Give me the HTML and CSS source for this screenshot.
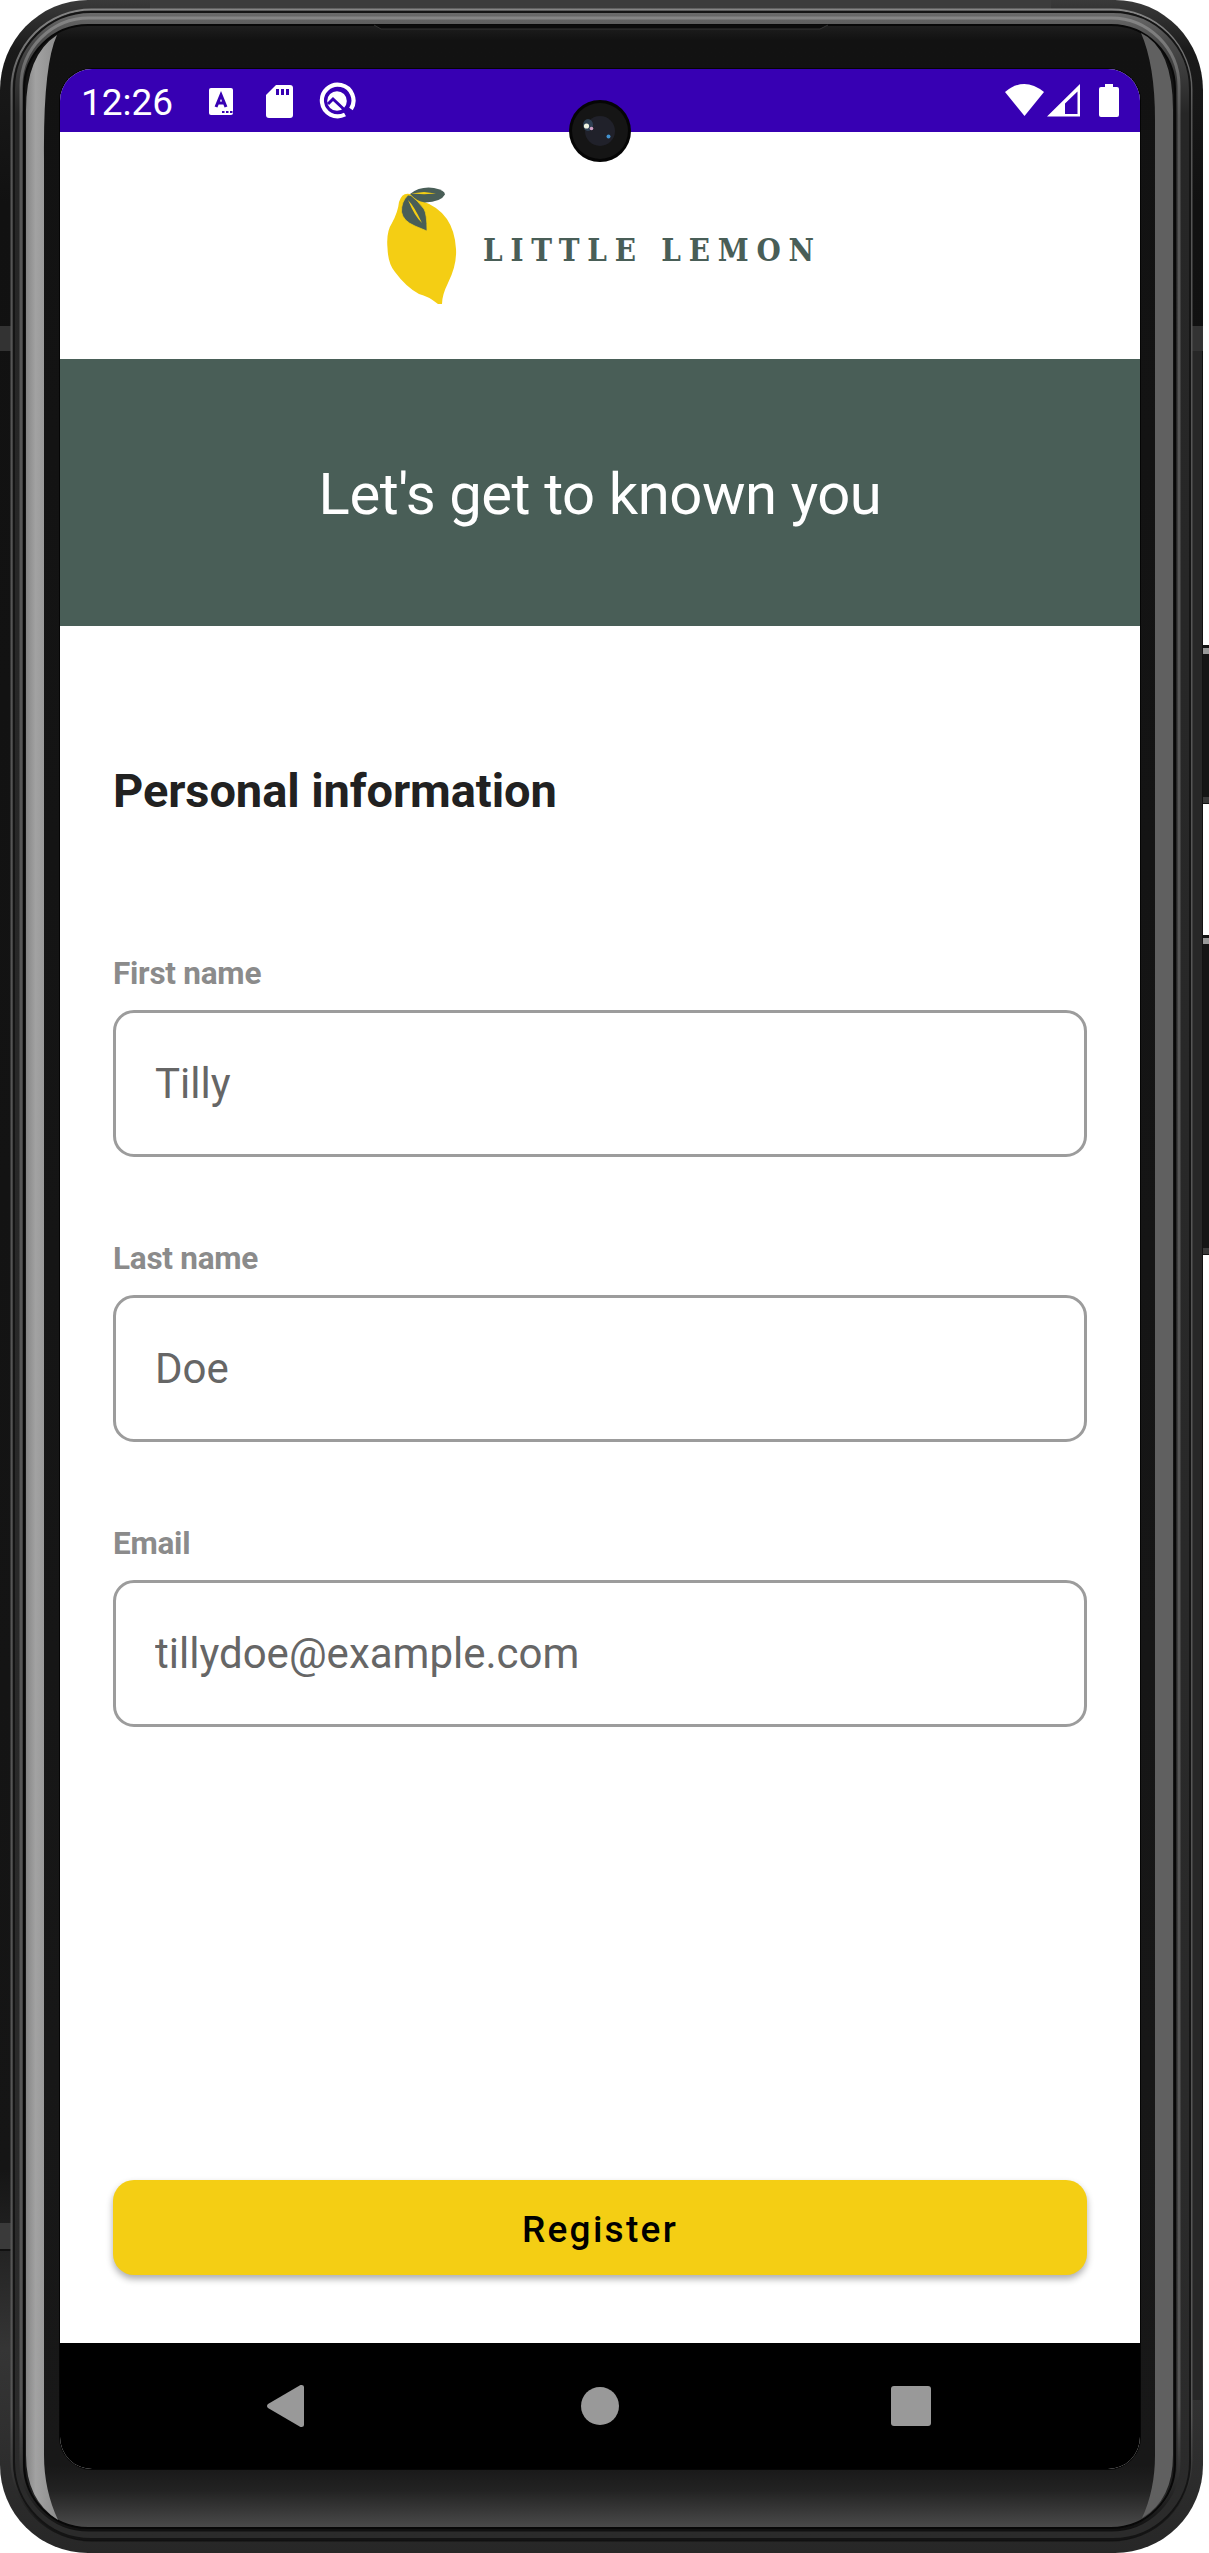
FILE: index.html
```html
<!DOCTYPE html>
<html lang="en">
<head>
<meta charset="utf-8">
<title>Little Lemon</title>
<link rel="stylesheet" href="styles.css">
</head>
<body>
<div class="phone">
  <svg class="frame" viewBox="0 0 1209 2553" aria-hidden="true">
    <defs>
      <linearGradient id="rim" x1="0" y1="0" x2="0" y2="1">
        <stop offset="0" stop-color="#3a3a3a"/><stop offset=".02" stop-color="#1a1a1a"/><stop offset=".08" stop-color="#111"/>
        <stop offset=".85" stop-color="#151515"/><stop offset=".92" stop-color="#353535"/><stop offset="1" stop-color="#272727"/>
      </linearGradient>
      <linearGradient id="line" x1="0" y1="0" x2="0" y2="1">
        <stop offset="0" stop-color="#858585"/><stop offset=".04" stop-color="#555"/><stop offset=".95" stop-color="#555"/><stop offset="1" stop-color="#111"/>
      </linearGradient>
      <linearGradient id="band" x1="0" y1="0" x2="0" y2="1">
        <stop offset="0" stop-color="#6b6b6b"/><stop offset=".012" stop-color="#4a4a4a"/><stop offset=".04" stop-color="#262626"/><stop offset="1" stop-color="#2b2b2b"/>
      </linearGradient>
      <linearGradient id="glass" x1="0" y1="0" x2="0" y2="1">
        <stop offset="0" stop-color="#1f1f1f"/><stop offset=".006" stop-color="#121212"/><stop offset=".975" stop-color="#181818"/>
        <stop offset=".985" stop-color="#222"/><stop offset="1" stop-color="#4b4b4b"/>
      </linearGradient>
      <linearGradient id="shineL" x1="0" y1="0" x2="1" y2="0">
        <stop offset="0" stop-color="#858585"/><stop offset=".3" stop-color="#a2a2a2"/><stop offset="1" stop-color="#8d8d8d"/>
      </linearGradient>
    </defs>
    <g>
      <rect x="1200" y="645" width="12" height="159" fill="#151515"/>
      <rect x="1202" y="648" width="7" height="6" fill="#999"/>
      <rect x="1202" y="797" width="7" height="6" fill="#3a3a3a"/>
      <rect x="1200" y="935" width="12" height="320" fill="#151515"/>
      <rect x="1202" y="938" width="7" height="6" fill="#999"/>
      <rect x="1202" y="1248" width="7" height="6" fill="#3a3a3a"/>
    </g>
    <path fill="url(#rim)" d="M88 0H1115A88 90 0 0 1 1203 90V2465A88 88 0 0 1 1115 2553H88A88 88 0 0 1 0 2465V90A88 90 0 0 1 88 0Z"/>
    <path fill="#3c3c3c" d="M150 0H1051V9H150Z"/>
    <path fill="#272727" d="M1192 350H1202V2400H1192Z"/>
    <path fill="#333" d="M0 326H11V351H0ZM1192 326H1203V351H1192Z"/>
    <path fill="#3a3a3a" d="M0 2223H11V2249H0Z"/>
    <path fill="#111" d="M0 2249H11V2251H0Z"/>
    <rect x="11.500" y="9.500" width="1180" height="2531" rx="80" fill="#2c2c2c" stroke="url(#line)" stroke-width="2"/>
    <rect x="14" y="12" width="1176" height="2527" rx="77" fill="url(#band)" stroke="#141414" stroke-width="2"/>
    <rect x="21" y="18" width="1158" height="2512" rx="68" fill="none" stroke="url(#line)" stroke-width="3"/>
    <rect x="24" y="25" width="1151" height="2503" rx="64" fill="url(#glass)" stroke="#080808" stroke-width="2"/>
    <path fill="url(#shineL)" d="M57 35Q26 55 26 110V2455Q26 2500 58 2520Q44 2490 44 2455V160Q43 65 57 35Z"/>
    <path fill="#606060" d="M1141 33Q1173 48 1173 110V2455Q1173 2500 1142 2518Q1155 2490 1155 2455V120Q1155 65 1141 33Z"/>
    <path d="M374 25L381 29H820L828 25" fill="#0b0b0b" stroke="#333"/>
  </svg>
  <div class="screen">
    <div class="status">
      <span class="clock">12:26</span>
      <svg class="s-left" width="150" height="40" viewBox="0 0 150 40" fill="#fff">
        <rect x="3" y="7" width="24" height="27" rx="2"/>
        <path d="M10 26L15 14L20 26M12 22H18" fill="none" stroke="#3700b3" stroke-width="3"/>
        <path d="M16 30h2.500v2H16zm4 0h2.500v2H20zm4 0h2.500v2H24z" fill="#3700b3"/>
        <path d="M70 4H84a3 3 0 0 1 3 3V34a3 3 0 0 1-3 3H63a3 3 0 0 1-3-3V14Z"/>
        <path d="M70 8h3v6h-3zm5 0h3v6h-3zm5 0h3v6h-3z" fill="#3700b3"/>
        <path d="M139 33.500A15.800 15.800 0 1 1 145 28" fill="none" stroke="#fff" stroke-width="4.200"/>
        <circle cx="131" cy="20" r="9.800"/>
        <path d="M122 23L127 18L145 35" fill="none" stroke="#3700b3" stroke-width="3"/>
      </svg>
      <svg class="s-right" width="116" height="40" viewBox="0 0 116 40" fill="#fff">
        <path d="M1 11Q20-5 40 11L20.500 35Z"/>
        <path fill-rule="evenodd" d="M76 3V35.500H43ZM73.500 10.500L61 22.500V33H73.500Z"/>
        <path d="M101 3h8v3h4a2 2 0 0 1 2 2V34a2 2 0 0 1-2 2H97a2 2 0 0 1-2-2V8a2 2 0 0 1 2-2h4Z"/>
      </svg>
      <svg class="camera" viewBox="0 0 62 62">
        <circle cx="31" cy="31" r="31" fill="#050505"/><circle cx="31" cy="31" r="28" fill="#151515"/><circle cx="31" cy="31" r="15" fill="#20212a"/>
        <ellipse cx="19" cy="25" rx="5" ry="6" fill="#365066" opacity=".7"/><circle cx="17.500" cy="26" r="2.600" fill="#eef2df"/><circle cx="22.500" cy="28.500" r="1.800" fill="#cf9fc4"/><circle cx="39.500" cy="36.500" r="2" fill="#4292d0"/>
      </svg>
    </div>
    <header class="brand">
      <svg class="logo" width="460" height="150" viewBox="0 0 460 150">
        <path fill="#f4ce14" d="M40 24Q32 22 29 32Q28 42 22 53Q16 62 17.500 78Q18 94 25 102Q36 117 49 124Q58 126 68 134H72Q72 125 78 113Q87 95 86 79Q84 42 52 31Z"/>
        <path fill="#495e57" d="M40 24Q50 16 64 18Q75 20 75 24.500Q71 32 55 32.500Q46 31 40 24Z"/>
        <path fill="#495e57" stroke="#f4ce14" stroke-width=".7" d="M38 25Q31 32 31.500 42Q33 51 45 56L57 61Q57 44 54 39Q47 30 41 25.500Z"/>
        <path fill="#f4ce14" d="M41 23.500L54 22L66 23.400L54 24.200ZM38 30Q44 36 52 53Q45 47 38 30Z"/>
        <text class="wordmark" x="113" y="90.700" textLength="331" lengthAdjust="spacing">LITTLE LEMON</text>
      </svg>
    </header>
    <div class="hero"><h1>Let's get to known you</h1></div>
    <main class="form">
      <h2>Personal information</h2>
      <label class="field"><span>First name</span><input type="text" value="Tilly"></label>
      <label class="field"><span>Last name</span><input type="text" value="Doe"></label>
      <label class="field"><span>Email</span><input type="text" value="tillydoe@example.com"></label>
      <button class="register">Register</button>
    </main>
    <nav class="nav">
      <svg width="1080" height="126" viewBox="0 0 1080 126" fill="#999">
        <path d="M240.500 42L208 61Q206 63 208 65L240.500 84Q244 84.500 244 82V44Q244 41.500 240.500 42Z"/>
        <circle cx="540" cy="63" r="19"/><rect x="831" y="43" width="40" height="40" rx="3"/>
      </svg>
    </nav>
  </div>
</div>
</body>
</html>
```
FILE: styles.css
```css
* { box-sizing: border-box; }
body { margin: 0; background: #fff; font-family: Roboto, sans-serif; }
.phone { position: relative; width: 1209px; height: 2553px; padding: 69px 69px 84px 60px; overflow: hidden; }
.frame { position: absolute; inset: 0; width: 1209px; height: 2553px; }
.screen { position: relative; display: flex; flex-direction: column; width: 1080px; height: 2400px; background: #fff; border-radius: 32px; box-shadow: 0 0 0 1px #050505; }
.status { position: relative; display: flex; align-items: center; height: 63px; padding: 0 20px 0 21px; background: #3700b3; border-radius: 32px 32px 0 0; }
.clock { width: 125px; padding-top: 3px; color: #fff; font-size: 37px; line-height: 63px; }
.s-right { margin-left: auto; }
.camera { position: absolute; left: 509px; top: 31px; width: 62px; height: 62px; }
.brand { height: 227px; padding: 38px 0 0 310px; }
.logo { display: block; }
.wordmark { font-family: "DejaVu Serif Condensed", "DejaVu Serif", serif; font-size: 31px; font-stretch: condensed; font-weight: 700; fill: #495e57; }
.hero { display: flex; align-items: center; justify-content: center; height: 267px; padding-top: 3px; background: #495e57; }
h1 { margin: 0; color: #fff; font-size: 58px; font-weight: 400; line-height: 68px; letter-spacing: -.43px; }
.form { display: flex; flex: 1; flex-direction: column; padding: 132px 53px 0; }
h2 { margin: 0 0 101px; color: #212121; font-size: 47px; font-weight: 700; line-height: 66px; letter-spacing: -.08px; }
.field { display: flex; flex-direction: column; gap: 18px; margin-bottom: 53px; }
.field:nth-of-type(3) { margin-bottom: 0; }
.field span { height: 67px; padding-top: 30px; color: #8b8b8b; font-size: 31.5px; font-weight: 700; line-height: 37px; letter-spacing: -.25px; }
.field input { width: 100%; height: 147px; padding: 0 39px; border: 3px solid #9c9c9c; border-radius: 21px; background: #fff; color: #666; font: 400 42px Roboto, sans-serif; outline: 0; }
.register { height: 95px; margin-top: auto; margin-bottom: 68px; padding: 4px 0 0; border: 0; border-radius: 21px; background: #f4ce14; color: #000; font: 500 37px Roboto, sans-serif; letter-spacing: 2.3px; box-shadow: 0 4px 7px rgba(0,0,0,.32); }
.nav { height: 126px; background: #000; border-radius: 0 0 32px 32px; }
.nav svg { display: block; }
```
